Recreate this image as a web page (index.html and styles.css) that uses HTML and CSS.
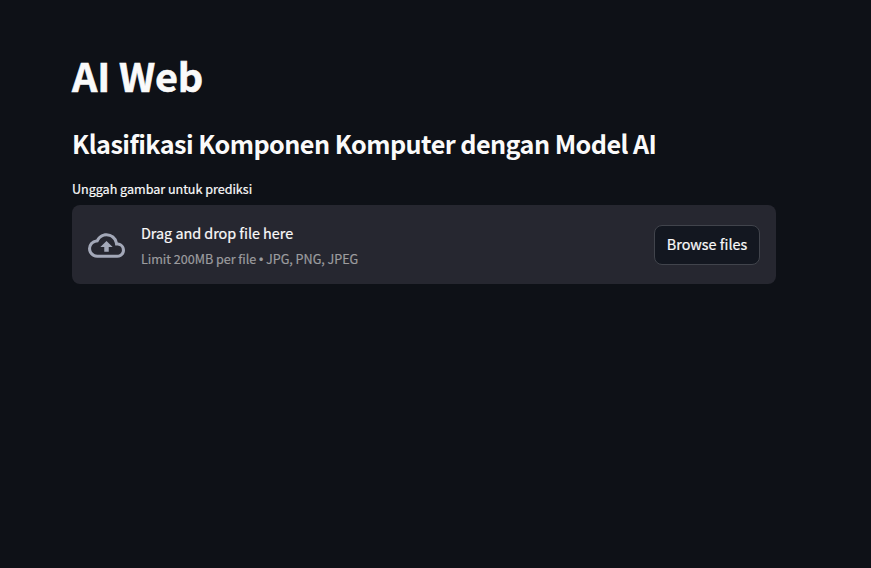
FILE: index.html
```html
<!DOCTYPE html>
<html lang="id">
<head>
<meta charset="utf-8">
<title>AI Web</title>
<link rel="stylesheet" href="styles.css">
</head>
<body>
<main class="page">
  <h1 class="title">AI Web</h1>
  <h2 class="subtitle">Klasifikasi Komponen Komputer dengan Model AI</h2>
  <label class="label" for="browse">Unggah gambar untuk prediksi</label>
  <section class="dropzone">
    <svg class="cloud" viewBox="0 0 24 24" aria-hidden="true"><path d="M19.35 10.04A7.49 7.49 0 0012 4C9.11 4 6.6 5.64 5.35 8.04A5.994 5.994 0 000 14c0 3.31 2.69 6 6 6h13c2.76 0 5-2.24 5-5 0-2.64-2.05-4.78-4.65-4.96zM19 18H6c-2.21 0-4-1.79-4-4 0-2.05 1.53-3.76 3.56-3.97l1.07-.11.5-.95A5.469 5.469 0 0112 6c2.62 0 4.88 1.86 5.39 4.43l.3 1.5 1.53.11A2.98 2.98 0 0122 15c0 1.65-1.35 3-3 3zM8 13h2.55v3h2.9v-3H16l-4-4z"/></svg>
    <div class="info">
      <span class="prompt">Drag and drop file here</span>
      <span class="limit">Limit 200MB per file <span class="dot">•</span> JPG, PNG, JPEG</span>
    </div>
    <button class="browse" id="browse" type="button">Browse files</button>
  </section>
</main>
</body>
</html>
```
FILE: styles.css
```css
* { box-sizing: border-box; }
body {
  margin: 0;
  min-height: 100vh;
  background: #0e1117;
  color: #fafafa;
  font-family: "Noto Sans CJK SC", "Noto Sans", sans-serif;
}
.page { width: 704px; margin-left: 72px; padding-top: 48px; }
.title {
  margin: 0;
  font-size: 39.6px;
  line-height: 53px;
  font-weight: 700;
  letter-spacing: -.15px;
  -webkit-text-stroke: .6px currentColor;
}
.subtitle {
  margin: 25px 0 0;
  font-size: 25.2px;
  line-height: 34px;
  font-weight: 600;
  letter-spacing: -.56px;
}
.label {
  display: block;
  margin: 18px 0 5px;
  font-size: 12.6px;
  line-height: 22px;
  letter-spacing: -.03px;
}
.label, .prompt, .limit, .browse { -webkit-text-stroke: .2px currentColor; }
.dropzone {
  display: flex;
  align-items: center;
  height: 79px;
  padding: 0 16px;
  border-radius: 8px;
  background: #262730;
}
.cloud { width: 37px; height: 37px; margin: 2px 16px 0 0; fill: #a3a8b8; }
.info { display: flex; flex-direction: column; flex: 1; gap: 1px; padding-top: 3px; }
.prompt { font-size: 14.4px; line-height: 25px; letter-spacing: -.03px; }
.limit { font-size: 12.6px; line-height: 26px; letter-spacing: -.03px; color: #9c9c9f; }
.dot { font: 12px/1 "Liberation Sans", sans-serif; }
.browse {
  width: 106px;
  height: 40px;
  padding: 0 0 2px;
  border: 1px solid #41444c;
  border-radius: 8px;
  background: #131720;
  color: inherit;
  font: 14.4px "Noto Sans CJK SC", "Noto Sans", sans-serif;
}
```
